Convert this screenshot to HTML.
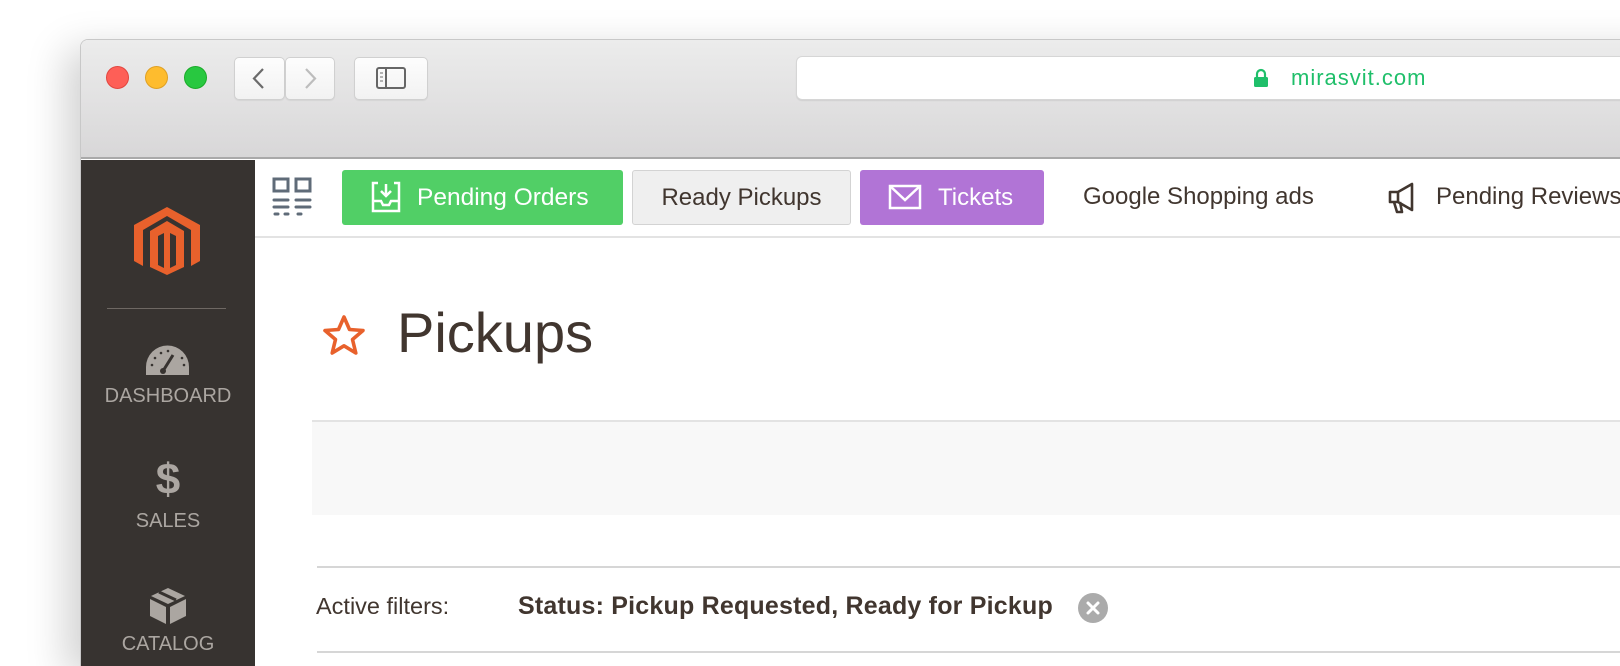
<!DOCTYPE html>
<html style="width:1620px;height:666px;overflow:hidden"><head><meta charset="utf-8"><style>
*{margin:0;padding:0;box-sizing:border-box}
body{width:1620px;height:666px;overflow:hidden;background:#fff;font-family:"Liberation Sans",sans-serif;position:relative}
.abs{position:absolute}
.win{left:80px;top:39px;width:1600px;height:627px;border-radius:8px 0 0 0;box-shadow:-14px 10px 40px rgba(0,0,0,.18);border:1px solid #c8c8c8;border-bottom:none;overflow:hidden;background:#fff}
.title{left:0;top:0;width:100%;height:119px;background:linear-gradient(#ececec,#d8d7d8);border-bottom:2px solid #a9a9a9}
.dot{width:23px;height:23px;border-radius:50%}
.btn{background:linear-gradient(#fdfdfd,#f2f2f2);border:1px solid #d0d0d0;border-radius:5px;box-shadow:0 1px 1px rgba(0,0,0,.06)}
.side{left:0;top:120px;width:174px;height:520px;background:#373330}
.lbl{color:#aba6a1;font-size:20px;text-align:center;width:174px;left:0}
.tb{font-size:24px;color:#41362f}
.tab{height:55px;border-radius:3px;line-height:55px}
</style></head><body>
<div class="abs win">
 <div class="abs title">
  <div class="abs dot" style="left:25px;top:26px;background:#fe5f57;border:1px solid #e2463f"></div>
  <div class="abs dot" style="left:64px;top:26px;background:#febc2e;border:1px solid #dfa023"></div>
  <div class="abs dot" style="left:103px;top:26px;background:#28c840;border:1px solid #1aab29"></div>
  <div class="abs btn" style="left:153px;top:17px;width:51px;height:43px"></div>
  <div class="abs btn" style="left:204px;top:17px;width:50px;height:43px"></div>
  <svg class="abs" style="left:153px;top:17px" width="101" height="43"><path d="M29 12 L20 21.5 L29 31" stroke="#6b6b6b" stroke-width="2.2" fill="none"/><path d="M72 12 L81 21.5 L72 31" stroke="#bdbdbd" stroke-width="2.2" fill="none"/></svg>
  <div class="abs btn" style="left:273px;top:17px;width:74px;height:43px"></div>
  <svg class="abs" style="left:295px;top:27px" width="30" height="24"><rect x="1" y="1" width="28" height="20" rx="2" fill="none" stroke="#666" stroke-width="2"/><line x1="10" y1="1" x2="10" y2="21" stroke="#666" stroke-width="2"/><path d="M4 6h3M4 10h3M4 14h3" stroke="#888" stroke-width="1.3"/></svg>
  <div class="abs" style="left:715px;top:16px;width:900px;height:44px;background:#fff;border:1px solid #d6d6d6;border-radius:6px;box-shadow:0 1px 1px rgba(0,0,0,.08)"></div>
  <svg class="abs" style="left:1172px;top:28px" width="16" height="20"><path d="M4 9V6a4 4 0 0 1 8 0v3" stroke="#1fbf6a" stroke-width="2.2" fill="none"/><rect x="1" y="9" width="14" height="10" rx="1.5" fill="#1fbf6a"/></svg>
  <div class="abs" style="left:1210px;top:25px;font-size:22px;color:#1fbf6a;letter-spacing:1px">mirasvit.com</div>
 </div>
 <div class="abs side">
  <svg class="abs" style="left:51px;top:45px" width="70" height="70" viewBox="0 0 70 70"><path d="M35 2 L68 20 L68 56 L59 61 L59 25 L35 11 L11 25 L11 61 L2 56 L2 20 Z" fill="#e8612c"/><path d="M35 16 L52 26 L52 62 L35 70 L18 62 L18 26 Z M26 31 L26 60 L32 63 L32 28 Z M38 28 L38 63 L44 60 L44 31 Z" fill="#e8612c" fill-rule="evenodd"/></svg>
  <div class="abs" style="left:26px;top:148px;width:119px;height:1px;background:#6e6863"></div>
  <svg class="abs" style="left:64px;top:185px" width="45" height="30"><path d="M1 30 V22 A21.5 21.5 0 0 1 44 22 V30 Z" fill="#aba6a1"/><path d="M18 26 L28 10" stroke="#373330" stroke-width="3"/><circle cx="18" cy="26" r="3" fill="#373330"/><g fill="#373330"><circle cx="7" cy="20" r="1.3"/><circle cx="10" cy="13" r="1.3"/><circle cx="16" cy="8" r="1.3"/><circle cx="23" cy="6" r="1.3"/><circle cx="37" cy="13" r="1.3"/><circle cx="39" cy="20" r="1.3"/></g></svg>
  <div class="abs lbl" style="top:225px">DASHBOARD</div>
  <div class="abs lbl" style="top:295px;font-size:44px;font-weight:bold;line-height:50px">$</div>
  <div class="abs lbl" style="top:350px">SALES</div>
  <svg class="abs" style="left:68px;top:427px" width="38" height="38" viewBox="0 0 38 38"><path d="M19 1 L36 9 L19 17 L2 9 Z" fill="#aba6a1"/><path d="M10 5 L27 13" stroke="#373330" stroke-width="3"/><path d="M1 12 L17 20 L17 37 L1 29 Z M21 20 L37 12 L37 29 L21 37 Z" fill="#aba6a1"/></svg>
  <div class="abs lbl" style="top:473px">CATALOG</div>
 </div>
 <div class="abs" style="left:174px;top:120px;width:1430px;height:78px;border-bottom:2px solid #e3e3e3;background:#fff"></div>
 <svg class="abs" style="left:191px;top:137px" width="40" height="40"><g fill="none" stroke="#5f6b78" stroke-width="3"><rect x="2" y="2" width="14" height="12"/><rect x="24" y="2" width="14" height="12"/></g><g stroke="#5f6b78" stroke-width="3" stroke-linecap="round"><path d="M2 23h14M24 23h14M2 30h14M24 30h14M3 37h3M13 37h3M26 37h3"/></g></svg>
 <div class="abs tab" style="left:261px;top:130px;width:281px;background:#51cf66;color:#fff;font-size:24.5px">
  <svg class="abs" style="left:28px;top:11px" width="32" height="32" viewBox="0 0 32 32"><path d="M8 2H3v28h26V2h-5M3 20h8l2 4h6l2-4h8" fill="none" stroke="#fff" stroke-width="2.5"/><path d="M16 3v12M11 10l5 5 5-5" fill="none" stroke="#fff" stroke-width="2.5"/></svg>
  <span class="abs" style="left:75px">Pending Orders</span></div>
 <div class="abs tab tb" style="left:551px;top:130px;width:219px;background:#efefef;border:1px solid #d3d3d3;text-align:center;line-height:53px">Ready Pickups</div>
 <div class="abs tab" style="left:779px;top:130px;width:184px;background:#b174d6;color:#fff;font-size:24px">
  <svg class="abs" style="left:28px;top:14px" width="34" height="26"><rect x="2" y="2" width="30" height="22" fill="none" stroke="#fff" stroke-width="2.5"/><path d="M2 2l15 14 15-14" fill="none" stroke="#fff" stroke-width="2.5"/></svg>
  <span class="abs" style="left:78px">Tickets</span></div>
 <div class="abs tb" style="left:1002px;top:143px">Google Shopping ads</div>
 <svg class="abs" style="left:1306px;top:142px" width="34" height="32" viewBox="0 0 34 32"><path d="M3 10h8l14-8v26L11 20H3Z M11 10v10M7 20l3 10h5l-2-10" fill="none" stroke="#41362f" stroke-width="2.6" stroke-linejoin="round"/></svg>
 <div class="abs tb" style="left:1355px;top:143px">Pending Reviews</div>
 <svg class="abs" style="left:241px;top:274px" width="44" height="42" viewBox="0 0 44 42"><path d="M22 3 L27.5 15.5 L41 16.5 L30.5 25.5 L33.8 39 L22 31.8 L10.2 39 L13.5 25.5 L3 16.5 L16.5 15.5 Z" fill="none" stroke="#e8612c" stroke-width="3.6" stroke-linejoin="round"/></svg>
 <div class="abs" style="left:316px;top:260px;font-size:56px;color:#41362f">Pickups</div>
 <div class="abs" style="left:231px;top:380px;width:1380px;height:95px;background:#f8f8f8;border-top:2px solid #e3e3e3"></div>
 <div class="abs" style="left:236px;top:526px;width:1380px;height:2px;background:#d6d6d6"></div>
 <div class="abs" style="left:235px;top:553px;font-size:23.5px;color:#41362f">Active filters:</div>
 <div class="abs" style="left:437px;top:552px;font-size:25px;font-weight:bold;color:#41362f;letter-spacing:.2px">Status: Pickup Requested, Ready for Pickup</div>
 <svg class="abs" style="left:996px;top:552px" width="32" height="32"><circle cx="16" cy="16" r="15" fill="#ababab"/><path d="M11 11l10 10M21 11l-10 10" stroke="#fff" stroke-width="3" stroke-linecap="round"/></svg>
 <div class="abs" style="left:236px;top:611px;width:1380px;height:2px;background:#d6d6d6"></div>
</div>
</body></html>
